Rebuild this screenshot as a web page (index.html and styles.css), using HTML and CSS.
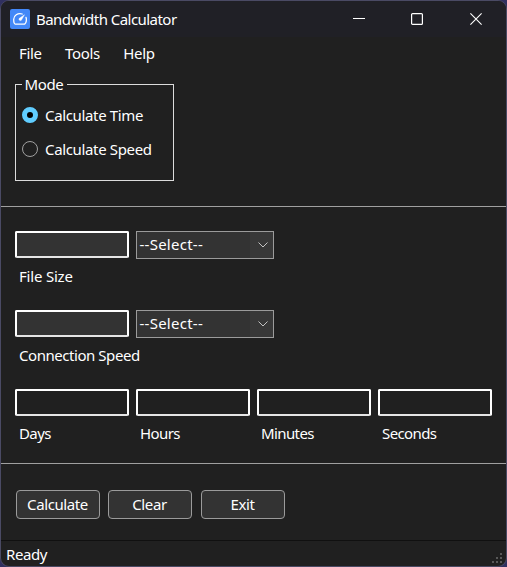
FILE: index.html
```html
<!DOCTYPE html>
<html lang="en">
<head>
<meta charset="utf-8">
<title>Bandwidth Calculator</title>
<link rel="stylesheet" href="styles.css">
</head>
<body>
<div class="window">
  <header class="titlebar">
    <svg class="app-icon" width="20" height="20" viewBox="0 0 20 20"><rect width="20" height="20" rx="2" fill="#4388f8"/><path d="M12.2 5C7.7 3.6 3.7 6.5 3.7 10.3c0 2.5.6 4.8 1.6 4.8h9.4c1.7-1 2.1-4.5 1.3-6.8" fill="none" stroke="#fff" stroke-width="1.3" stroke-linecap="round" stroke-linejoin="round"/><path d="M14.5 5.7 11.3 11.3a1.5 1.5 0 0 1-2.3-1.7z" fill="#fff" stroke="#fff" stroke-width=".4"/></svg>
    <h1 class="title">Bandwidth Calculator</h1>
    <div class="controls">
      <svg width="12" height="12" viewBox="0 0 12 12"><path d="M0 5.5h12" stroke="#fff"/></svg>
      <svg width="12" height="12" viewBox="0 0 12 12"><rect x=".6" y=".6" width="10.8" height="10.8" rx="1" fill="none" stroke="#fff" stroke-width="1.2"/></svg>
      <svg class="close" width="12" height="12" viewBox="0 0 12 12"><path d="M.4.4l11.2 11.2M11.6.4.4 11.6" stroke="#fff" stroke-width="1.1"/></svg>
    </div>
  </header>
  <nav class="menu"><span>File</span><span>Tools</span><span>Help</span></nav>
  <section class="mode-area">
    <div class="group">
      <span class="legend">Mode</span>
      <label class="option"><i class="radio checked"></i><span>Calculate Time</span></label>
      <label class="option"><i class="radio"></i><span>Calculate Speed</span></label>
    </div>
  </section>
  <section class="fields">
    <div class="row">
      <div class="cell"><div class="box filled"></div><span class="short">File Size</span></div>
      <div class="select"><span>--Select--</span><svg width="10" height="6" viewBox="0 0 10 6"><path d="M.5.5 5 5 9.5.5" fill="none" stroke="#c4c4c4"/></svg></div>
    </div>
    <div class="row">
      <div class="cell"><div class="box filled"></div><span>Connection Speed</span></div>
      <div class="select"><span>--Select--</span><svg width="10" height="6" viewBox="0 0 10 6"><path d="M.5.5 5 5 9.5.5" fill="none" stroke="#c4c4c4"/></svg></div>
    </div>
    <div class="row results">
      <div class="cell"><div class="box"></div><span>Days</span></div>
      <div class="cell"><div class="box"></div><span>Hours</span></div>
      <div class="cell"><div class="box"></div><span>Minutes</span></div>
      <div class="cell"><div class="box"></div><span>Seconds</span></div>
    </div>
  </section>
  <section class="actions"><div class="button">Calculate</div><div class="button">Clear</div><div class="button exit">Exit</div></section>
  <footer class="status"><span>Ready</span>
    <svg width="12" height="12" viewBox="0 0 12 12" shape-rendering="crispEdges"><path d="M8 1h2v2H8zM4 5h2v2H4zM8 5h2v2H8zM0 9h2v2H0zM4 9h2v2H4zM8 9h2v2H8z" fill="#585858"/></svg>
  </footer>
</div>
</body>
</html>
```
FILE: styles.css
```css
* { box-sizing: border-box; }
body { margin: 0; background: #303060; color: #fff; font: 15px/20px "Noto Sans", "Open Sans", sans-serif; letter-spacing: -0.4px; overflow: hidden; }
.window { width: 507px; height: 567px; border: 1px solid #4a4a64; border-radius: 9px; background: #202020; display: flex; flex-direction: column; overflow: hidden; }
.titlebar { height: 36px; flex: none; background: #202026; display: flex; align-items: center; padding: 0 24px 0 9px; }
.app-icon { flex: none; }
.title { margin: 0 0 0 6px; font: inherit; letter-spacing: -0.54px; }
.controls { margin-left: auto; display: flex; gap: 46px; }
.controls svg { display: block; }
.controls .close { margin-left: 1px; }
.menu { height: 33px; flex: none; display: flex; align-items: center; gap: 23.5px; padding: 0 0 2px 18px; letter-spacing: -0.35px; }
.mode-area { height: 137px; flex: none; border-bottom: 1px solid #a0a0a0; padding: 14px 0 0 14px; }
.group { width: 159px; height: 97px; border: 1px solid #dcdcdc; padding: 0 0 0 6px; letter-spacing: -0.35px; }
.legend { display: block; width: 45px; height: 20px; margin-top: -11px; padding-left: 2.5px; background: #202020; }
.option { display: flex; align-items: center; height: 20px; gap: 7px; margin-top: 11px; }
.option + .option { margin-top: 14px; }
.radio { width: 16px; height: 16px; border: 1px solid #a0a0a0; border-radius: 50%; }
.radio.checked { border: 5px solid #60cdff; background: #000; }
.fields { height: 257px; flex: none; border-bottom: 1px solid #a0a0a0; padding: 24px 0 0 14px; }
.row { display: flex; gap: 7px; height: 79px; }
.cell { width: 114px; white-space: nowrap; }
.cell span { display: block; margin: 8px 0 0 4px; letter-spacing: -0.45px; }
.cell .short { letter-spacing: -0.2px; }
.box { height: 27px; border: 2px solid #fff; border-bottom-color: #e5e5e5; border-radius: 2px; }
.filled { background: #333; }
.results .cell span { margin-top: 7px; letter-spacing: -0.6px; }
.select { width: 138px; height: 28px; border: 1px solid #9b9b9b; background: linear-gradient(90deg, #333 113px, #383838 113px); display: flex; align-items: center; justify-content: space-between; padding: 0 5px 0 2.5px; letter-spacing: 0.25px; }
.select span { margin-top: -2px; }
.actions { display: flex; gap: 8px; height: 76px; flex: none; padding: 26px 0 0 15px; }
.button { width: 84px; height: 29px; border: 1px solid #9b9b9b; border-radius: 4px; background: #333; text-align: center; line-height: 26px; padding-right: 1px; }
.exit { margin-left: 1px; }
.status { flex: 1; border-top: 1px solid #101010; display: flex; justify-content: space-between; padding: 3px 2px 0 5px; }
.status svg { margin-top: 8px; }
```
